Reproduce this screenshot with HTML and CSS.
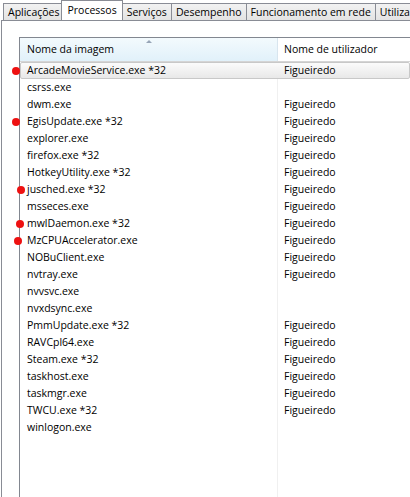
FILE: index.html
```html
<!DOCTYPE html>
<html>
<head>
<meta charset="utf-8">
<link rel="stylesheet" href="styles.css">
</head>
<body>
<div class="tabs">
  <div class="tab">Aplicações</div>
  <div class="tab active">Processos</div>
  <div class="tab">Serviços</div>
  <div class="tab">Desempenho</div>
  <div class="tab">Funcionamento em rede</div>
  <div class="tab">Utilizadores</div>
</div>
<div class="panel">
  <div class="listbox">
    <div class="header">
      <div class="hcol c1 sorted"><span class="arrow"></span>Nome da imagem</div>
      <div class="hcol c2">Nome de utilizador</div>
    </div>
    <div class="rows">
      <div class="row selected"><span class="dot d16"></span><div class="c1">ArcadeMovieService.exe *32</div><div class="c2">Figueiredo</div></div>
      <div class="row"><div class="c1">csrss.exe</div><div class="c2"></div></div>
      <div class="row"><div class="c1">dwm.exe</div><div class="c2">Figueiredo</div></div>
      <div class="row"><span class="dot d16"></span><div class="c1">EgisUpdate.exe *32</div><div class="c2">Figueiredo</div></div>
      <div class="row"><div class="c1">explorer.exe</div><div class="c2">Figueiredo</div></div>
      <div class="row"><div class="c1">firefox.exe *32</div><div class="c2">Figueiredo</div></div>
      <div class="row"><div class="c1">HotkeyUtility.exe *32</div><div class="c2">Figueiredo</div></div>
      <div class="row"><span class="dot d21"></span><div class="c1">jusched.exe *32</div><div class="c2">Figueiredo</div></div>
      <div class="row"><div class="c1">msseces.exe</div><div class="c2">Figueiredo</div></div>
      <div class="row"><span class="dot d20"></span><div class="c1">mwlDaemon.exe *32</div><div class="c2">Figueiredo</div></div>
      <div class="row"><span class="dot d18"></span><div class="c1">MzCPUAccelerator.exe</div><div class="c2">Figueiredo</div></div>
      <div class="row"><div class="c1">NOBuClient.exe</div><div class="c2">Figueiredo</div></div>
      <div class="row"><div class="c1">nvtray.exe</div><div class="c2">Figueiredo</div></div>
      <div class="row"><div class="c1">nvvsvc.exe</div><div class="c2"></div></div>
      <div class="row"><div class="c1">nvxdsync.exe</div><div class="c2"></div></div>
      <div class="row"><div class="c1">PmmUpdate.exe *32</div><div class="c2">Figueiredo</div></div>
      <div class="row"><div class="c1">RAVCpl64.exe</div><div class="c2">Figueiredo</div></div>
      <div class="row"><div class="c1">Steam.exe *32</div><div class="c2">Figueiredo</div></div>
      <div class="row"><div class="c1">taskhost.exe</div><div class="c2">Figueiredo</div></div>
      <div class="row"><div class="c1">taskmgr.exe</div><div class="c2">Figueiredo</div></div>
      <div class="row"><div class="c1">TWCU.exe *32</div><div class="c2">Figueiredo</div></div>
      <div class="row"><div class="c1">winlogon.exe</div><div class="c2"></div></div>
    </div>
  </div>
</div>
</body>
</html>
```
FILE: styles.css
```css
html, body {
  margin: 0;
  padding: 0;
  background: #ffffff;
  width: 410px;
  height: 497px;
  overflow: hidden;
  font-family: "Open Sans", "Noto Sans", sans-serif;
  font-size: 10.5px;
  color: #000;
}

.tabs {
  display: flex;
  align-items: flex-end;
  height: 20px;
  padding-left: 3px;
  position: relative;
  z-index: 2;
  white-space: nowrap;
  overflow: hidden;
}

.tab {
  height: 17px;
  line-height: 16px;
  padding: 0 4px;
  border: 1px solid #898c95;
  border-bottom: none;
  margin-right: -1px;
  background: linear-gradient(#f2f2f2, #e3e3e3);
  color: #000;
  box-sizing: border-box;
  flex: none;
}

.tab.active {
  height: 21px;
  line-height: 18px;
  background: #ffffff;
  margin: 0 -1px -1px -2px;
  padding: 0 5px;
  position: relative;
  z-index: 3;
}

.panel {
  margin-left: 1px;
  border-left: 1px solid #898c95;
  border-top: 1px solid #898c95;
  height: 477px;
  padding: 16px 0 0 17px;
  box-sizing: border-box;
}

.listbox {
  border-left: 1px solid #828790;
  border-top: 1px solid #828790;
  height: 100%;
  background: #fff;
  position: relative;
}

.header {
  display: flex;
  height: 24px;
  border-bottom: 1px solid #d5d5d5;
  box-sizing: border-box;
}

.hcol {
  line-height: 23px;
  padding-left: 7px;
  box-sizing: border-box;
  position: relative;
}

.c1 {
  width: 258px;
  flex: none;
  padding-left: 7px;
  box-sizing: border-box;
  border-right: 1px solid #f0f0f0;
}

.c2 {
  flex: 1;
  padding-left: 6px;
}

.header .c1 {
  border-right: 1px solid #d8e5ee;
}

.hcol.sorted {
  background: linear-gradient(#f3fafd, #e1f1fa);
}

.arrow {
  position: absolute;
  left: 126px;
  top: 2px;
  width: 0;
  height: 0;
  border-left: 3px solid transparent;
  border-right: 3px solid transparent;
  border-bottom: 3px solid #97a5b7;
}

.rows {
  height: calc(100% - 24px);
  box-sizing: border-box;
  display: flex;
  flex-direction: column;
}

.rows::after {
  content: "";
  flex: 1;
  width: 258px;
  border-right: 1px solid #f0f0f0;
  box-sizing: border-box;
}

.row {
  display: flex;
  height: 17px;
  line-height: 17px;
  position: relative;
  flex: none;
  white-space: nowrap;
}

.row.selected {
  border: 1px solid #c8c8c8;
  border-radius: 2px;
  background: linear-gradient(#fbfbfb, #e8e8e8);
  line-height: 15px;
  box-sizing: border-box;
}

.row.selected .c1 {
  width: 257px;
  padding-left: 6px;
  border-right: none;
}

.row.selected .c2 {
  padding-left: 6px;
}

.dot {
  position: absolute;
  top: 5px;
  width: 8px;
  height: 8px;
  border-radius: 50%;
  background: #ee1111;
  z-index: 5;
}

.dot.d16 { left: -8px; }
.dot.d18 { left: -6px; }
.dot.d20 { left: -4px; }
.dot.d21 { left: -3px; }

.row.selected .dot { top: 4px; left: -9px; }
```
